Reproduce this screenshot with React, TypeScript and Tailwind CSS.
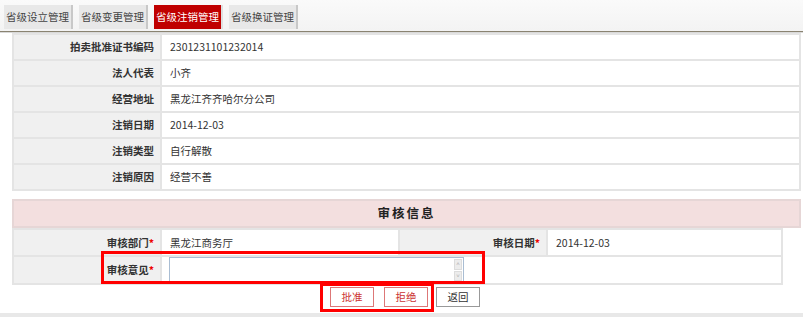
import React from 'react';

const tabs = ['省级设立管理', '省级变更管理', '省级注销管理', '省级换证管理'];

const infoRows: [string, string][] = [
  ['拍卖批准证书编码', '2301231101232014'],
  ['法人代表', '小齐'],
  ['经营地址', '黑龙江齐齐哈尔分公司'],
  ['注销日期', '2014-12-03'],
  ['注销类型', '自行解散'],
  ['注销原因', '经营不善'],
];

const font = { fontFamily: '"Noto Sans CJK SC", "Liberation Sans", sans-serif' };

export default function App() {
  return (
    <div className="w-[803px] h-[317px] bg-white text-[10.5px] text-[#333] overflow-hidden relative" style={font}>
      {/* tab bar */}
      <div className="h-[33px] bg-gradient-to-b from-[#fafafa] to-[#f3f3f3] border-b border-[#d9d9d9]">
        <div className="h-[32px] border-b border-[#8a8371] flex items-start gap-[6px] pl-[4px] pt-[5px]">
          {tabs.map((t, i) => (
            <div
              key={t}
              className={
                i === 2
                  ? 'h-[24px] w-[69px] flex items-center justify-center whitespace-nowrap bg-[#c00000] text-white border-r-2 border-[#e0e0e0]'
                  : 'h-[24px] w-[69px] flex items-center justify-center whitespace-nowrap bg-[#e8e8e8] text-[#444] border-r-2 border-[#c8c8c8]'
              }
            >
              {t}
            </div>
          ))}
        </div>
      </div>

      {/* 注销信息 */}
      <div className="pl-[12px] pr-[2px]">
        <table className="w-[789px] border-collapse">
          <tbody>
            {infoRows.map(([k, v]) => (
              <tr key={k} className="h-[26px]">
                <td className="w-[148px] bg-[#f0f0f0] border-2 border-[#e4e4e4] text-right pr-[6px] font-bold">{k}</td>
                <td className="border-2 border-[#e4e4e4] pl-[8px]">{v}</td>
              </tr>
            ))}
          </tbody>
        </table>

        {/* 审核信息 */}
        <div className="mt-[8px] w-[789px] h-[29px] bg-[#f3dfdf] border-2 border-[#e6d6d6] flex items-center justify-center font-bold text-[12.5px] tracking-[2px] text-[#222]">
          审核信息
        </div>
        <table className="w-[771px] border-collapse">
          <tbody>
            <tr className="h-[27px]">
              <td className="w-[148px] bg-[#f0f0f0] border-2 border-[#e4e4e4] text-right pr-[6px] font-bold">
                审核部门<span className="text-[#e00]">*</span>
              </td>
              <td className="w-[238px] border-2 border-[#e4e4e4] pl-[8px]">黑龙江商务厅</td>
              <td className="w-[148px] bg-[#f0f0f0] border-2 border-[#e4e4e4] text-right pr-[6px] font-bold">
                审核日期<span className="text-[#e00]">*</span>
              </td>
              <td className="border-2 border-[#e4e4e4] pl-[8px]">2014-12-03</td>
            </tr>
            <tr className="h-[28px]">
              <td className="bg-[#f0f0f0] border-2 border-[#e4e4e4] text-right pr-[6px] font-bold">
                审核意见<span className="text-[#e00]">*</span>
              </td>
              <td colSpan={3} className="border-2 border-[#e4e4e4] pl-[7px] py-0">
                <div className="w-[295px] h-[26px] border border-[#a9bdd3] flex justify-end">
                  <div className="w-[9px] flex flex-col gap-[1px] py-[1px] pr-[1px]">
                    <div className="flex-1 bg-[#ececec] border border-[#dcdcdc] flex items-center justify-center text-[6px] leading-none text-[#aaa]">˄</div>
                    <div className="flex-1 bg-[#ececec] border border-[#dcdcdc] flex items-center justify-center text-[6px] leading-none text-[#aaa]">˅</div>
                  </div>
                </div>
              </td>
            </tr>
          </tbody>
        </table>

        {/* buttons */}
        <div className="flex gap-[10px] pl-[318px] pt-[2px]">
          <button className="w-[44px] h-[20px] border border-[#d77] text-[#c33] bg-white">批准</button>
          <button className="w-[44px] h-[20px] border border-[#d77] text-[#c33] bg-white">拒绝</button>
          <button className="ml-[-2px] w-[44px] h-[20px] border border-[#999] text-[#333] bg-white">返回</button>
        </div>
      </div>

      {/* red highlights */}
      <div className="absolute left-[101px] top-[251px] w-[384px] h-[33px] border-[3px] border-[#f00]" />
      <div className="absolute left-[320px] top-[283px] w-[114px] h-[29px] border-[3px] border-[#f00]" />

      <div className="absolute left-0 right-0 bottom-0 h-[4px] bg-[#e8e8e8]" />
    </div>
  );
}
